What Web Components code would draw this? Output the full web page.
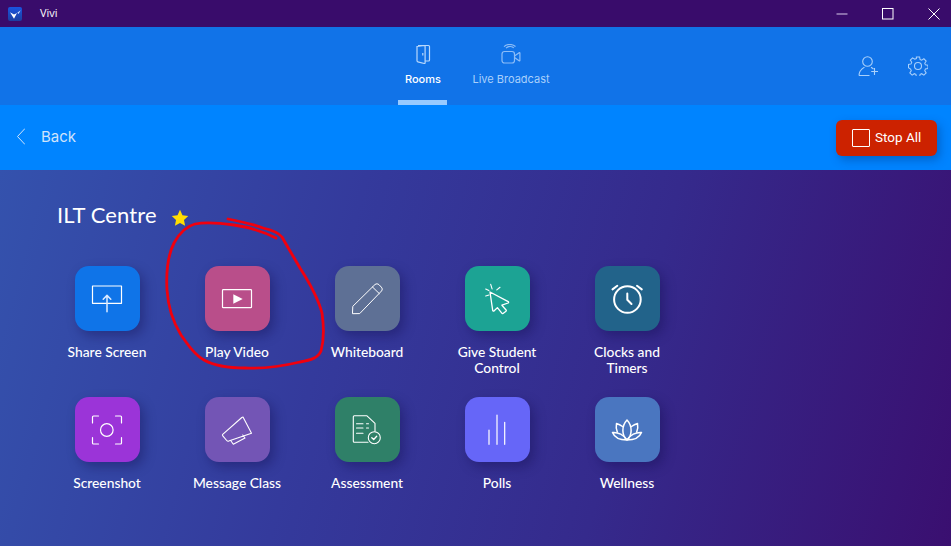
<!DOCTYPE html>
<html><head><meta charset="utf-8">
<style>html,body{margin:0;padding:0;height:100%;overflow:hidden}</style>
</head><body>
<vv-app>
  <vv-titlebar slot="top"></vv-titlebar>
  <vv-nav slot="top"></vv-nav>
  <vv-subbar slot="top"></vv-subbar>
  <vv-title>ILT Centre</vv-title>
  <vv-grid>
    <vv-tile label="Share Screen" color="#0f74e8"><svg viewBox="0 0 65 65"><path d="M17.5 20h29v17.3h-29z" stroke-width="1.200"/><path d="M32 45.700V29.500M28.200 33.200L32 29.400l3.800 3.800" stroke-width="1.500" stroke="#dceaff"/></svg></vv-tile>
    <vv-tile label="Play Video" color="#b94e8a"><svg viewBox="0 0 65 65"><rect x="17.500" y="23.700" width="29" height="18" rx=".8" stroke-width="1.200"/><path d="M28.300 28.300v9.400l9.400-4.700z" fill="#fff" stroke="none"/></svg></vv-tile>
    <vv-tile label="Whiteboard" color="#5e7095"><svg viewBox="0 0 65 65"><path d="M17.500 47.300l.3-7L40 18.500c1.400-1 2.800-.8 4 .2l2.300 2.400c1.200 1.300 1.200 2.700.2 3.900L25 47.300zM37.400 20.900l6.900 6.700" stroke-width="1"/></svg></vv-tile>
    <vv-tile label="Give Student Control" color="#1ca394"><svg viewBox="0 0 65 65"><path d="M25 26l18.200 9.600c.6.400.5 1.100-.1 1.400l-6.200 2.200 4.200 4.800c.3.400.3.900-.1 1.200l-3 2.200c-.4.300-.9.200-1.200-.2l-4.400-5.600-3.200 3.200c-.6.600-1.400.3-1.500-.5z" stroke-width="1.300"/><path d="M25.700 18.300l1.400 4.600M35 21.300l-3.200 2.600M20.700 23l3.200 1.600M20.700 30l3.300-1" stroke-width="1.100"/></svg></vv-tile>
    <vv-tile label="Clocks and Timers" color="#22638a"><svg viewBox="0 0 65 65"><circle cx="32.400" cy="33.500" r="13.300" stroke-width="2"/><path d="M32.300 27.500v6.200l4.200 4.300M17.500 23.400l4.800-3.600M46.800 23.400L42 19.800" stroke-width="2"/></svg></vv-tile>
    <vv-tile label="Screenshot" color="#9b34d8"><svg viewBox="0 0 65 65"><path d="M23.500 19h-5a1 1 0 0 0-1 1v6M40.500 19h5a1 1 0 0 1 1 1v6M23.500 47h-5a1 1 0 0 1-1-1v-5.500M40.500 47h5a1 1 0 0 0 1-1v-5.500" stroke-width="1.200"/><circle cx="31.800" cy="33" r="6.300" stroke-width="1.200"/></svg></vv-tile>
    <vv-tile label="Message Class" color="#7355b5"><svg viewBox="0 0 65 65"><path d="M17.700 37.300L36.800 20.500l1.200-.5 8.500 16.200-22.800 7.900c-.8.200-1.500 0-2-.6l-3.900-4.700c-.5-.6-.5-1.100-.1-1.500zM26 44l2.300 3.300 11.700-6.300-2.300-3" stroke-width="1.100"/></svg></vv-tile>
    <vv-tile label="Assessment" color="#2f8068"><svg viewBox="0 0 65 65"><path d="M33 45.300H19.300a1 1 0 0 1-1-1V19.700a1 1 0 0 1 1-1h12.400l8.300 7.600v8" stroke-width="1.100"/><path d="M21.500 26.700h6.500M21.500 31h6.500M21.500 36.300h6.500M31.500 26.700h2M31.500 31h2" stroke-width="1.100"/><circle cx="39.300" cy="40.700" r="6" stroke-width="1.100"/><path d="M36.800 40.700l1.900 1.800 3-3.200" stroke-width="1.300"/></svg></vv-tile>
    <vv-tile label="Polls" color="#6666f8"><svg viewBox="0 0 65 65"><path d="M24 33v14.300M32 18v29.300M39.700 25.300v22" stroke-width="1.200"/></svg></vv-tile>
    <vv-tile label="Wellness" color="#4a76c0"><svg viewBox="0 0 65 65"><g stroke-width="1.500"><path d="M32 43c-5.500-5-5.500-14 0-20 5.500 6 5.500 15 0 20z"/><path d="M32 43c-3-5-9-8-14.500-7.500 2 5 8 7.500 14.500 7.500zM32 43c3-5 9-8 14.500-7.500-2 5-8 7.500-14.500 7.500z"/><path d="M27.500 29.500c-2-1.500-3.800-2.400-6-3-.6 3-.2 6 .8 8.500M36.500 29.500c2-1.500 3.800-2.400 6-3 .6 3 .2 6-.8 8.500"/></g></svg></vv-tile>
  </vv-grid>
  <svg slot="over" width="951" height="546" viewBox="0 0 951 546" fill="none" stroke="#f0000e" stroke-width="2.800" stroke-linecap="round" stroke-linejoin="round">
    <path d="M228 219C243 222 256 225 263 228C272 230 278 232 282 237C287 246 293 256 300 268C309 282 318 298 322 313C324 327 324 340 321 351C318 358 311 360 300 362C283 366 264 369 245 368C228 368 213 365 204 360C195 355 188 345 181 335C173 322 168 306 167 290C166 272 168 255 174 243C180 232 187 226 195 224C205 222 220 223 234 225C248 227 264 232 276 238"/>
  </svg>
</vv-app>
<script>
function def(name, css, html, setup){
  customElements.define(name, class extends HTMLElement{
    constructor(){super();const r=this.attachShadow({mode:'open'});r.innerHTML='<style>'+css+'</style>'+html;}
    connectedCallback(){ if(setup) setup(this,this.shadowRoot); }
  });
}
def('vv-app',`
  :host{display:block;position:relative;width:951px;height:546px;overflow:hidden;color:#fff;font-family:Lato,sans-serif}
  .root{display:flex;flex-direction:column;height:100%}
  main{flex:1;background:linear-gradient(105deg,#3452ad 0%,#343a9c 35%,#352a8c 65%,#3a0f70 100%);padding:33px 0 0 0}
  .over{position:absolute;left:0;top:0;pointer-events:none}
`,`<div class="root"><slot name="top"></slot><main><slot></slot></main></div><div class="over"><slot name="over"></slot></div>`);
def('vv-titlebar',`
  :host{display:flex;align-items:center;height:27px;background:#390c6b;color:#fff;padding-right:11px;box-sizing:border-box}
  .logo{margin-left:8px;width:14px;height:14px;border-radius:2px;background:linear-gradient(#1a55e0,#1c3fa0);display:block}
  .name{margin-left:18px;font:11px "Open Sans",sans-serif;position:relative;top:-1px}
  .sp{flex:1}
  .ctls{display:flex;gap:34px;align-items:center}
  svg{display:block}
`,`<svg class="logo" viewBox="0 0 14 14"><path d="M2 5.300L6 7.500 9 6 6 11.700z" fill="#fff"/><path d="M9.300 5.800L12.700 3.300 10.500 7z" fill="#cfe0ff"/></svg><span class="name">Vivi</span><span class="sp"></span>
<div class="ctls"><svg width="12" height="12"><path d="M.5 6h11" stroke="#a58dc0" stroke-width="1.500"/></svg>
<svg width="12" height="12"><rect x=".5" y=".5" width="10.500" height="10.500" fill="none" stroke="#fff"/></svg>
<svg width="12" height="12"><path d="M.5.5l11 11M11.500.5l-11 11" stroke="#fff" stroke-width="1"/></svg></div>`);
def('vv-nav',`
  :host{display:grid;grid-template-columns:1fr auto 1fr;height:78px;background:#1173e8}
  .tabs{display:flex;gap:25px;grid-column:2;padding-right:3px}
  .right{display:flex;justify-content:flex-end;gap:30px;padding:29px 23px 0 0;align-items:flex-start}
  svg{display:block;fill:none;stroke:#a9d0fb;stroke-width:1.100}
`,`<div class="tabs"><vv-tab active label="Rooms"><svg width="20" height="20" viewBox="0 0 20 20" style="fill:none;stroke:#b9d8fc;stroke-width:1.200"><path d="M5 1.500h10.500a1 1 0 0 1 1 1v13.500a1 1 0 0 1-1 1H12M4 2.500L11.500 1.500a.6.6 0 0 1 .6.600V19a.6.6 0 0 1-.7.5L4.800 17.800a1 1 0 0 1-.8-1zM9.800 9v2.500"/></svg></vv-tab>
<vv-tab label="Live Broadcast"><svg width="20" height="20" viewBox="0 0 20 20" style="fill:none;stroke:#8dbdf7;stroke-width:1.200"><rect x="1" y="7.500" width="12.500" height="11.500" rx="2.500"/><path d="M13.500 12l4.600-3.300a.5.500 0 0 1 .8.400v7.300a.5.500 0 0 1-.8.400l-4.600-3.300M5 4.200a5.600 5.600 0 0 1 4.800-1.700c1.400.1 2.400.7 3 1.500M3 2.600A8 8 0 0 1 9 .5c2 0 4 .8 5.500 2"/></svg></vv-tab></div>
<div class="right"><svg width="20" height="20" viewBox="0 0 20 20"><circle cx="9.500" cy="5.500" r="4.800"/><path d="M1 19.500c0-3.500 1.500-6 5.500-8.400M13 11.200c1 .6 1.800 1.100 2.500 1.900M1 19.500h10.500M16.500 12v7M13.200 15.500h6.800"/></svg>
<svg width="20" height="20" viewBox="0 0 20 20"><circle cx="10" cy="10" r="3.500"/><path d="M8.300.5h3.400l.5 2.700 1.700.7 2.300-1.500 2.400 2.400-1.500 2.300.7 1.700 2.700.5v3.400l-2.700.5-.7 1.700 1.500 2.300-2.400 2.400-2.300-1.500-1.700.7-.5 2.700H8.300l-.5-2.700-1.700-.7-2.300 1.500-2.400-2.400 1.500-2.300-.7-1.700L0 11.700V8.300l2.700-.5.700-1.700L1.900 3.800l2.400-2.400 2.300 1.500 1.700-.7z" transform="translate(.5 .5) scale(.95)"/></svg></div>`);
def('vv-tab',`
  :host{display:flex;flex-direction:column;align-items:center;height:78px;box-sizing:border-box;padding-top:17px;color:#a9d0fb;font:400 11px/14px Inter,sans-serif;position:relative}
  :host([active]){color:#fff;width:49px}
  .t{margin-top:8px;white-space:nowrap}
  :host([active]) .t{font-weight:500}
  .bar{display:none;position:absolute;left:0;right:0;bottom:0;height:5px;background:#97caff}
  :host([active]) .bar{display:block}
`,`<slot></slot><span class="t"></span><i class="bar"></i>`,(el,r)=>{r.querySelector('.t').textContent=el.getAttribute('label')});
def('vv-subbar',`
  :host{display:flex;align-items:center;justify-content:space-between;height:65px;background:#0084ff;box-sizing:border-box;padding:0 14px 0 17px}
  .l{display:flex;align-items:center;gap:16px;color:#cfe3fb;font:15px Inter,sans-serif;margin-top:-2px}
  button{all:unset;box-sizing:border-box;display:flex;align-items:center;gap:5px;width:101px;height:36px;padding-left:16px;margin-top:1px;background:#cc2200;border-radius:6px;color:#fff;font:400 13.500px Roboto,sans-serif;box-shadow:3px 4px 10px rgba(0,40,110,.35)}
  button span{margin-top:-2px}
  i{display:block;width:16px;height:16px;border:1px solid #fff;border-radius:1px}
`,`<div class="l"><svg width="8" height="17" viewBox="0 0 8 17" fill="none" stroke="#cfe3fb"><path d="M8 .5L.5 8.500 8 16.500"/></svg><span>Back</span></div><button><i></i><span>Stop All</span></button>`);
def('vv-title',`
  :host{display:flex;align-items:center;gap:14px;margin-left:57px;height:24px;font:400 22px/24px Lato,sans-serif;letter-spacing:.1px;color:#fff;white-space:nowrap}
`,`<slot></slot><svg width="18" height="18" viewBox="0 0 24 24" style="margin-top:5px"><path d="M12 1l3.300 7.300 7.700.9-5.700 5.300 1.500 7.900L12 18.500l-6.800 3.900 1.500-7.900L1 9.200l7.700-.9z" fill="#ffdd00"/></svg>`);
def('vv-grid',`
  :host{display:grid;grid-template-columns:repeat(5,130px);grid-auto-rows:131px;margin:39px 0 0 42px}
`,`<slot></slot>`);
def('vv-tile',`
  :host{display:flex;flex-direction:column;align-items:center;text-align:center;font:500 13.800px/16px Lato,sans-serif;color:#fff}
  .box{width:65px;height:65px;border-radius:14px;box-shadow:4px 5px 12px rgba(15,10,70,.35);display:block}
  ::slotted(svg){display:block;width:65px;height:65px;fill:none;stroke:#fff;stroke-width:1.500;stroke-linecap:round;stroke-linejoin:round}
  .l{margin-top:13px;width:96px}
`,`<div class="box"><slot></slot></div><div class="l"></div>`,(el,r)=>{r.querySelector('.box').style.background=el.getAttribute('color');r.querySelector('.l').textContent=el.getAttribute('label')});
</script>
</body></html>
